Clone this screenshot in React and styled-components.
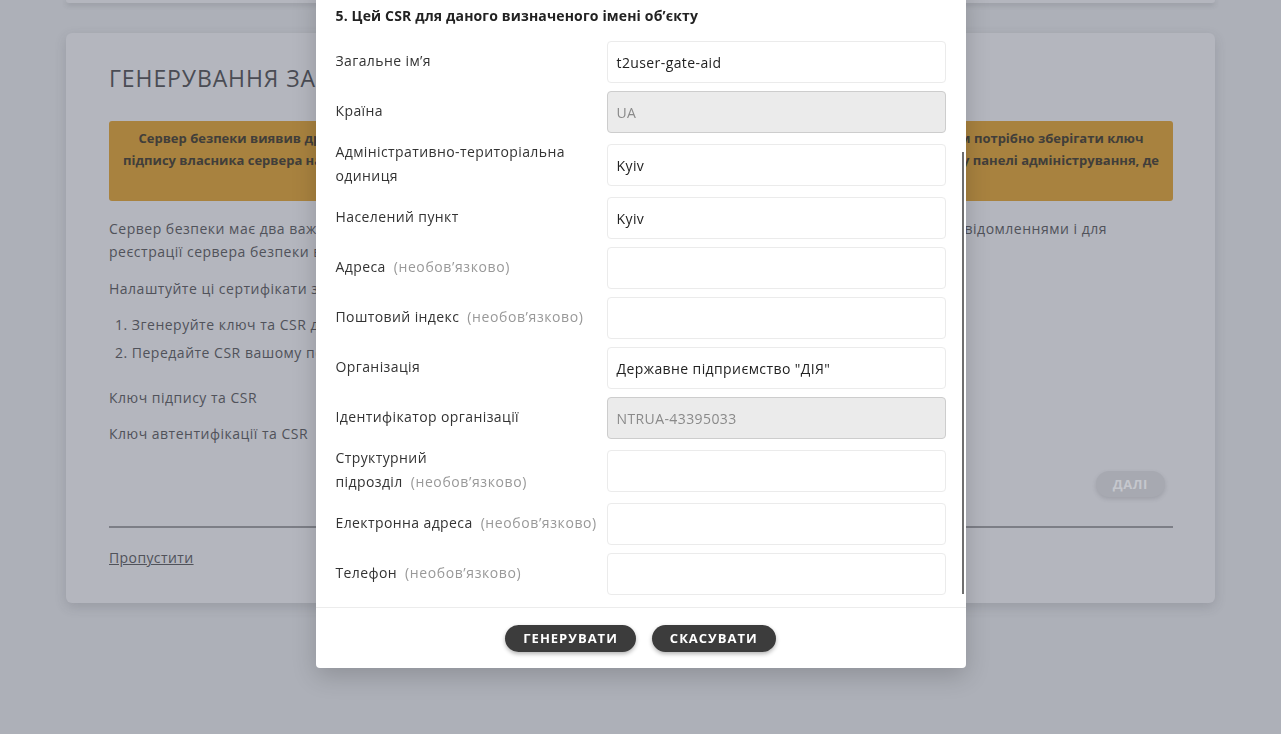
import React from "react";
import styled, { createGlobalStyle } from "styled-components";

const Global = createGlobalStyle`
  html, body { margin: 0; padding: 0; }
  body {
    font-family: "Open Sans", "Liberation Sans", sans-serif;
    background: #adb0b8;
    overflow: hidden;
    height: 734px;
  }
  * { box-sizing: border-box; }
`;

const Page = styled.div`
  width: 1281px;
  height: 734px;
  padding: 0 66px;
  background: #adb0b8;
`;

const TopCard = styled.div`
  height: 3px;
  background: #b4b6be;
  border-radius: 0 0 6px 6px;
  box-shadow: 0 2px 5px rgba(60, 62, 70, 0.25);
`;

const Card = styled.div`
  margin-top: 30px;
  background: #b4b6be;
  border-radius: 6px;
  padding: 31px 42px 33px 43px;
  box-shadow: 0 4px 12px rgba(60, 62, 70, 0.18);
  color: #50525a;
`;

const Title = styled.h1`
  margin: 0;
  font-size: 23px;
  line-height: 28px;
  font-weight: 400;
  color: #4a4c54;
  letter-spacing: 0.9px;
`;

const Warning = styled.div`
  margin-top: 29px;
  background: #a8823f;
  border-radius: 3px;
  padding: 6px 10px 8px;
  text-align: center;
  font-size: 13px;
  line-height: 22px;
  font-weight: 700;
  color: #413e3a;
`;

const Line = styled.div`
  white-space: nowrap;
`;

const Para = styled.p`
  margin: ${(p) => p.$mt}px 0 0;
  font-size: 14px;
  line-height: 23px;
  letter-spacing: 0.5px;
  white-space: nowrap;
`;

const List = styled.ol`
  margin: 13px 0 0;
  padding: 0 0 0 6px;
  list-style: none;
  font-size: 14px;
  line-height: 24px;
  letter-spacing: 0.5px;
`;

const Item = styled.li`
  & + & { margin-top: 4px; }
`;

const KeyRows = styled.div`
  margin-top: 14px;
`;

const KeyRow = styled.div`
  height: 36px;
  display: flex;
  align-items: center;
  font-size: 14px;
  letter-spacing: 0.5px;
`;

const ButtonRow = styled.div`
  margin-top: 20px;
  display: flex;
  justify-content: flex-end;
  padding-right: 8px;
`;

const GhostButton = styled.button`
  height: 26px;
  padding: 0 17px;
  border: none;
  border-radius: 13px;
  background: #a7a9b1;
  color: #c5c7cd;
  font-family: inherit;
  font-weight: 700;
  font-size: 13px;
  letter-spacing: 0.6px;
  box-shadow: 0 2px 4px rgba(60, 62, 70, 0.18);
`;

const Divider = styled.hr`
  margin: 29px 0 0;
  border: none;
  border-top: 2px solid #7c7e86;
`;

const Link = styled.a`
  display: block;
  margin-top: 18px;
  font-size: 14px;
  line-height: 24px;
  letter-spacing: 0.4px;
  color: #50525a;
  text-decoration: underline;
`;

/* ---------- modal ---------- */

const Overlay = styled.div`
  position: fixed;
  inset: 0;
  display: flex;
  justify-content: center;
  align-items: flex-end;
  padding-bottom: 66px;
`;

const Modal = styled.div`
  width: 650px;
  background: #fff;
  border-radius: 4px;
  box-shadow: 0 8px 24px rgba(0, 0, 0, 0.18);
  color: #2b2b2b;
  flex-shrink: 0;
  letter-spacing: 0.4px;
`;

const Body = styled.div`
  position: relative;
  padding: 20px 20px 8px;
`;

const ModalTitle = styled.div`
  font-size: 14px;
  font-weight: 700;
  line-height: 24px;
  margin-bottom: 9px;
  letter-spacing: 0.15px;
  color: #222;
`;

const Row = styled.div`
  display: flex;
  align-items: center;
  padding: 4px 0;
`;

const Label = styled.div`
  width: 271px;
  flex-shrink: 0;
  font-size: 14px;
  line-height: 24px;
  color: #333;
  white-space: nowrap;
  transform: translateY(-1px);
`;

const Optional = styled.span`
  margin-left: 8px;
  font-size: 14px;
  letter-spacing: 0.6px;
  color: #999;
`;

const Input = styled.div`
  width: 339px;
  height: 42px;
  display: flex;
  align-items: center;
  padding: 0 9px;
  border-radius: 4px;
  font-size: 14px;
  border: 1px solid ${(p) => (p.$disabled ? "#cdcdcd" : "#ebebeb")};
  background: ${(p) => (p.$disabled ? "#ebebeb" : "#fff")};
  color: ${(p) => (p.$disabled ? "#8a8a8a" : "#222")};
`;

const Thumb = styled.div`
  position: absolute;
  right: 2px;
  bottom: 13px;
  width: 2px;
  height: 442px;
  background: #6e6e6e;
`;

const Footer = styled.div`
  height: 61px;
  border-top: 1px solid #ececec;
  display: flex;
  align-items: center;
  justify-content: center;
  gap: 16px;
`;

const DarkButton = styled.button`
  height: 27px;
  padding: 0 18px;
  border: none;
  border-radius: 14px;
  background: #3c3c3c;
  color: #fff;
  font-family: inherit;
  font-weight: 700;
  font-size: 13px;
  letter-spacing: 1px;
  box-shadow: 0 2px 4px rgba(0, 0, 0, 0.3);
`;

const fields = [
  { label: "Загальне ім’я", value: "t2user-gate-aid" },
  { label: "Країна", value: "UA", disabled: true },
  { label: ["Адміністративно-територіальна", "одиниця"], value: "Kyiv" },
  { label: "Населений пункт", value: "Kyiv" },
  { label: "Адреса", optional: true },
  { label: "Поштовий індекс", optional: true },
  { label: "Організація", value: "Державне підприємство \"ДІЯ\"" },
  { label: "Ідентифікатор організації", value: "NTRUA-43395033", disabled: true },
  { label: ["Структурний", "підрозділ"], optional: true },
  { label: "Електронна адреса", optional: true },
  { label: "Телефон", optional: true },
];

function FieldLabel({ label, optional }) {
  const opt = optional ? <Optional>(необов’язково)</Optional> : null;
  if (Array.isArray(label)) {
    return (
      <Label>
        {label[0]}
        <br />
        {label[1]}
        {opt}
      </Label>
    );
  }
  return (
    <Label>
      {label}
      {opt}
    </Label>
  );
}

export default function App() {
  return (
    <>
      <Global />
      <Page>
        <TopCard />
        <Card>
          <Title>ГЕНЕРУВАННЯ ЗАПИТІВ НА СЕРТИФІКАТИ</Title>
          <Warning>
            <Line>
              Сервер безпеки виявив драйвер апаратного токена. Якщо ви хочете використовувати апаратний токен для ключів, вам потрібно зберігати ключ
            </Line>
            <Line>
              підпису власника сервера на апаратному токені. Токен налаштовується та вводиться на сторінці «Ключі та сертифікати» у панелі адміністрування, де
            </Line>
            <Line>також можна ввести PIN-код токена.</Line>
          </Warning>
          <Para $mt={16}>
            Сервер безпеки має два важливі ключі: ключ підпису та автентифікації, які використовуються для захисту обмінів повідомленнями і для
            <br />
            реєстрації сервера безпеки в центральному сервері.
          </Para>
          <Para $mt={14}>Налаштуйте ці сертифікати за допомогою наступних кроків:</Para>
          <List>
            <Item>1. Згенеруйте ключ та CSR для кожного сертифіката.</Item>
            <Item>2. Передайте CSR вашому постачальнику сертифікатів.</Item>
          </List>
          <KeyRows>
            <KeyRow>Ключ підпису та CSR</KeyRow>
            <KeyRow>Ключ автентифікації та CSR</KeyRow>
          </KeyRows>
          <ButtonRow>
            <GhostButton disabled>ДАЛІ</GhostButton>
          </ButtonRow>
          <Divider />
          <Link>Пропустити</Link>
        </Card>
      </Page>
      <Overlay>
        <Modal>
          <Body>
            <ModalTitle>5. Цей CSR для даного визначеного імені об’єкту</ModalTitle>
            {fields.map((f, i) => (
              <Row key={i}>
                <FieldLabel label={f.label} optional={f.optional} />
                <Input $disabled={f.disabled}>{f.value}</Input>
              </Row>
            ))}
            <Thumb />
          </Body>
          <Footer>
            <DarkButton>ГЕНЕРУВАТИ</DarkButton>
            <DarkButton>СКАСУВАТИ</DarkButton>
          </Footer>
        </Modal>
      </Overlay>
    </>
  );
}
